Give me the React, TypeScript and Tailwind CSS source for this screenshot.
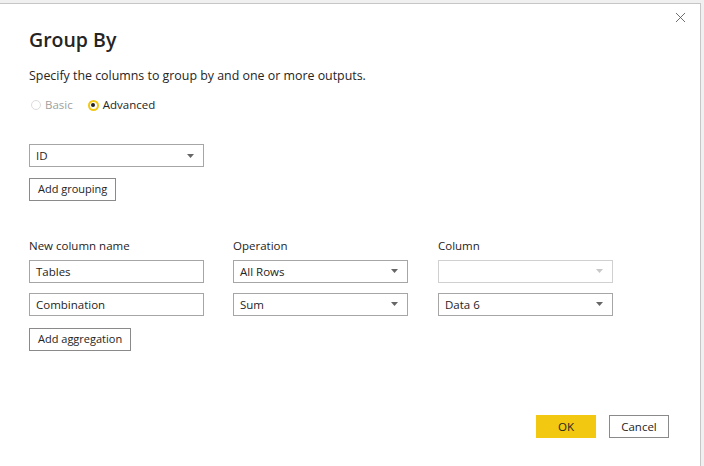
import { X } from "lucide-react"

const font = { fontFamily: '"Open Sans", "Noto Sans", sans-serif' }

function Caret({ disabled }: { disabled?: boolean }) {
  return (
    <svg width="7" height="4" viewBox="0 0 7 4" className="shrink-0">
      <path d="M0 0h7L3.5 4z" fill={disabled ? "#c8c8c8" : "#666"} />
    </svg>
  )
}

function Select({ value, disabled }: { value?: string; disabled?: boolean }) {
  return (
    <div
      className={
        "flex h-[23px] w-[175px] items-center justify-between border pl-[6px] pr-[9px] text-[11.5px] text-[#252423] " +
        (disabled ? "border-[#d0d0d0]" : "border-[#a6a6a6]")
      }
    >
      <span>{value}</span>
      <Caret disabled={disabled} />
    </div>
  )
}

function TextInput({ value }: { value: string }) {
  return (
    <div className="flex h-[23px] w-[175px] items-center border border-[#a6a6a6] pl-[6px] text-[11.5px] text-[#252423]">
      {value}
    </div>
  )
}

function Button({ label }: { label: string }) {
  return (
    <button className="h-[23px] border border-[#8a8a8a] bg-white px-[8px] text-[11px] text-[#252423]">
      {label}
    </button>
  )
}

export default function App() {
  return (
    <div className="h-[466px] w-[704px] overflow-hidden bg-[#f0f0f0] pt-[3px]" style={font}>
      <div className="relative h-[463px] w-[701px] border-t border-r border-[#c6c6c6] bg-white">
        <button className="absolute right-[11px] top-[5px] text-[#555]">
          <X size={17} strokeWidth={1.2} />
        </button>
        <div className="pl-[29px] pt-[22px]">
          <h1 className="text-[19.5px] font-semibold leading-[28px] text-[#252423]">Group By</h1>
          <p className="mt-[13px] text-[12.4px] leading-[18px] text-[#252423]">
            Specify the columns to group by and one or more outputs.
          </p>
          <div className="mt-[12px] flex items-center text-[11.5px] leading-[16px]">
            <span className="ml-[2px] h-[10px] w-[10px] rounded-full border border-[#dcdcdc]" />
            <span className="ml-[4px] text-[#a0a0a0]">Basic</span>
            <span className="ml-[15px] flex h-[11px] w-[11px] items-center justify-center rounded-full border-[2px] border-[#f2c811]">
              <span className="h-[4px] w-[4px] rounded-full bg-[#252423]" />
            </span>
            <span className="ml-[4px] text-[#252423]">Advanced</span>
          </div>
          <div className="mt-[31px]">
            <Select value="ID" />
          </div>
          <div className="mt-[8px]">
            <Button label="Add grouping" />
          </div>
          <div className="mt-[37px] grid w-[583px] grid-cols-[204px_205px_174px] gap-y-[10px] text-[11.5px] text-[#252423]">
            <div className="leading-[16px]">New column name</div>
            <div className="leading-[16px]">Operation</div>
            <div className="leading-[16px]">Column</div>
            <div className="-mt-[4px]"><TextInput value="Tables" /></div>
            <div className="-mt-[4px]"><Select value="All Rows" /></div>
            <div className="-mt-[4px]"><Select disabled /></div>
            <TextInput value="Combination" />
            <Select value="Sum" />
            <Select value="Data 6" />
          </div>
          <div className="mt-[9px]">
            <Button label="Add aggregation" />
          </div>
        </div>
        <div className="absolute bottom-[28px] right-[31px] flex gap-[13px] text-[11.5px]">
          <button className="h-[23px] w-[60px] bg-[#f2c811] text-[#252423]">OK</button>
          <button className="h-[23px] w-[60px] border border-[#8a8a8a] bg-white text-[#252423]">Cancel</button>
        </div>
      </div>
    </div>
  )
}
